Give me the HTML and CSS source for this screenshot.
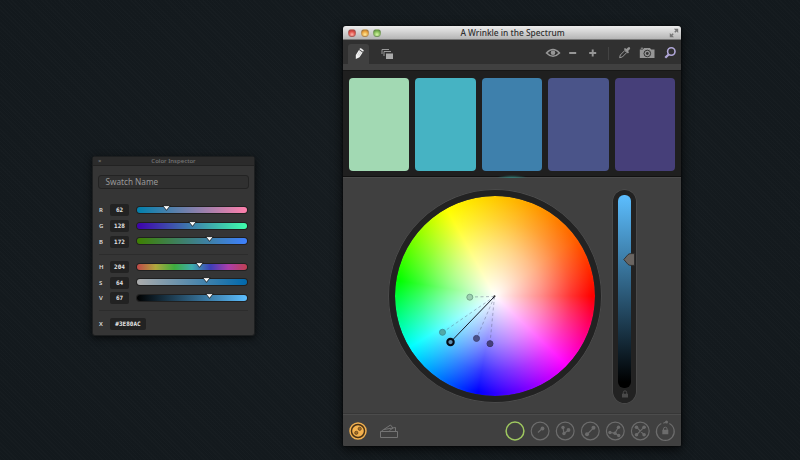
FILE: index.html
```html
<!DOCTYPE html>
<html lang="en">
<head>
<meta charset="utf-8">
<title>A Wrinkle in the Spectrum</title>
<link rel="stylesheet" href="styles.css">
</head>
<body>
<section class="inspector">
  <header class="ins-title"><span class="ins-close">×</span>Color Inspector</header>
  <div class="ins-name">Swatch Name</div>
  <div class="group rgb">
    <div class="row"><label>R</label><b>62</b><i class="track r"><svg class="knob k-r" viewBox="0 0 8 6"><path d="M.7.6h6.6L4 4.8z"/></svg></i></div>
    <div class="row"><label>G</label><b>128</b><i class="track g"><svg class="knob k-g" viewBox="0 0 8 6"><path d="M.7.6h6.6L4 4.8z"/></svg></i></div>
    <div class="row"><label>B</label><b>172</b><i class="track b"><svg class="knob k-b" viewBox="0 0 8 6"><path d="M.7.6h6.6L4 4.8z"/></svg></i></div>
  </div>
  <div class="group hsv">
    <div class="row"><label>H</label><b>204</b><i class="track h"><svg class="knob k-h" viewBox="0 0 8 6"><path d="M.7.6h6.6L4 4.8z"/></svg></i></div>
    <div class="row"><label>S</label><b>64</b><i class="track s"><svg class="knob k-s" viewBox="0 0 8 6"><path d="M.7.6h6.6L4 4.8z"/></svg></i></div>
    <div class="row"><label>V</label><b>67</b><i class="track v"><svg class="knob k-b" viewBox="0 0 8 6"><path d="M.7.6h6.6L4 4.8z"/></svg></i></div>
  </div>
  <div class="group hex">
    <div class="row"><label>X</label><b class="wide">#3E80AC</b></div>
  </div>
</section>

<main class="window">
  <header class="titlebar">
    <span class="lights"><i class="red"></i><i class="amber"></i><i class="green"></i></span>
    <span class="title">A Wrinkle in the Spectrum</span>
    <svg class="expand" viewBox="0 0 10 10"><path d="M4.800 .8H9.200v4.200zM.8 5v4.200h4.200z" fill="#777"/><path d="M8 2 5.800 4.200M2 8l2.200-2.200" stroke="#777" stroke-width="1.500"/></svg>
  </header>
  <nav class="toolbar">
    <span class="tab"><svg width="20" height="20" viewBox="0 0 20 20"><g transform="rotate(33 10 10)"><path d="M7.800 6.700h4.400v5.800L10.100 16 7.800 12.500z" fill="#f4f4f4"/><path d="M7.800 5.900V5q0-.8.800-.8h2.800q.8 0 .8.800v.9z" fill="#f4f4f4"/><path d="M9.400 7v5M10.900 7v5" stroke="#aaa" stroke-width=".4"/></g></svg></span>
    <svg class="layers" width="14" height="12" viewBox="0 0 14 12"><path d="M1 6V1.500h7M3 8V3.500h7" fill="none" stroke="#999" stroke-width="1"/><path d="M5 5.500h7V11H5z" fill="#aaa"/></svg>
    <svg class="tools" width="136" height="20" viewBox="0 0 136 20">
      <path d="M2.500 10Q9 3 15.500 10 9 16.500 2.500 10z" fill="none" stroke="#969696" stroke-width="1.500"/><circle cx="9" cy="9.800" r="2.300" fill="#969696"/>
      <path d="M25.200 10h7M45.200 10h7M48.700 6.500v7" stroke="#969696" stroke-width="1.900"/>
      <path d="M64.500 4v13" stroke="#434343"/>
      <path d="m75.600 14.700.7-2.700 4.500-4.500 2 2-4.500 4.500z" fill="none" stroke="#969696"/><path d="m79.800 6 1.200-1 1.400 1 1.600-1.600q1.200-.7 1.900.2.600 1-.1 1.700l-1.700 1.700.9 1.300-1.100 1.200z" fill="#969696"/>
      <path d="M95.800 6.500h3l1.300-1.500h5.800l1.300 1.500h3.300V15H95.800z" fill="#969696"/><path d="M96.800 5.200h2.300" stroke="#969696"/><circle cx="103.300" cy="10.500" r="3.300" fill="#969696" stroke="#333" stroke-width="1"/><circle cx="103.300" cy="10.500" r="1.400" fill="#333"/>
      <circle cx="127.300" cy="8.500" r="3.700" fill="none" stroke="#b1a7d8" stroke-width="1.600"/><path d="m124.600 11.400-3.300 3.400" stroke="#b1a7d8" stroke-width="2.200"/>
    </svg>
  </nav>
  <div class="band"></div>
  <div class="swatches"><i class="s1"></i><i class="s2"></i><i class="s3"></i><i class="s4"></i><i class="s5"></i></div>
  <div class="stage">
    <div class="glow"></div>
    <div class="wheel">
      <svg class="marks" viewBox="394.500 196.500 200 200">
        <g stroke="#555a77" stroke-opacity=".5" stroke-width=".8" stroke-dasharray="3 2.500" fill="none"><path d="M494 297l-25 .5M494 297l-52 36M494 297l-18 42M494 297l-4.500 47"/></g>
        <path d="M494 297l-42 43.500" stroke="#161a26" stroke-width="1"/><circle cx="494" cy="296.800" r="1" fill="#333"/>
        <circle cx="469.300" cy="297.700" r="3" fill="#9bcfb0" stroke="#76a98c"/>
        <circle cx="442" cy="332.800" r="3" fill="#52a9a8" stroke="#3c959f"/>
        <circle cx="476" cy="338.900" r="3" fill="#4a508b" stroke="#414679"/>
        <circle cx="489.500" cy="344.200" r="3" fill="#463f7d" stroke="#3c376e"/>
        <circle cx="450" cy="342.600" r="3.200" fill="#5b90b3" stroke="#050b14" stroke-width="2.100"/>
      </svg>
    </div>
    <div class="value">
      <i class="fill"></i>
      <svg class="lock" viewBox="0 0 8 8"><path d="M1 3.700h6V7.500H1z" fill="#4a4a4a"/><path d="M2.300 4V2.500a1.700 1.700 0 0 1 3.400 0V4" fill="none" stroke="#4a4a4a"/></svg>
      <svg class="handle" viewBox="0 0 12 13"><path d="M.8 6.500 5 1.600Q6.200.6 8 .6h3.500v11.800H8q-1.800 0-3-1z" fill="#6a6561" stroke="#272727" stroke-width=".8"/></svg>
    </div>
  </div>
  <footer class="footer">
    <svg width="52" height="22" viewBox="0 0 52 22">
      <circle cx="11" cy="11" r="8" fill="#493216" stroke="#efaf50" stroke-width="1.500"/><circle cx="11" cy="11" r="5.800" fill="#f3b14e"/><circle cx="12.700" cy="8.800" r="1.600" fill="#a76e25" stroke="#51391a" stroke-width=".7"/><circle cx="9.300" cy="12.800" r="1.600" fill="#a76e25" stroke="#51391a" stroke-width=".7"/>
      <path d="M33.500 11.500h17v6h-17zM34.500 11l9-6 2.500 3-3.500 2.500M37 9.500l11.500-2v4" fill="none" stroke="#747474"/>
    </svg>
    <svg width="174" height="22" viewBox="0 0 174 22">
      <circle cx="11" cy="11" r="8.900" fill="none" stroke="#9ec75f" stroke-width="1.500"/>
      <g fill="none" stroke="#6c6c6c" stroke-width="1.200"><circle cx="36.100" cy="11" r="8.900"/><circle cx="61.200" cy="11" r="8.900"/><circle cx="86.300" cy="11" r="8.900"/><circle cx="111.300" cy="11" r="8.900"/><circle cx="136.300" cy="11" r="8.900"/><path d="M157.300 3.500a8.900 8.900 0 1 0 8 0M161.500 2.200l-2.200 1"/>
        <path d="m34 12.500 4-3.800M59 7.500l1 6 4.500-3.500M83 14.500l6.500-6.700M106 12.500l5 .7 3.300-6M111 13.200l3.500 2.300M132.500 7.200l7.600 7.600M140.100 7.200l-7.600 7.600"/></g>
      <g fill="#6c6c6c"><circle cx="38.500" cy="8.500" r="1.900"/><circle cx="59" cy="7.500" r="1.700"/><circle cx="60" cy="13.500" r="1.700"/><circle cx="64.500" cy="10" r="1.900"/><circle cx="83" cy="14.300" r="2"/><circle cx="89.500" cy="7.800" r="2"/><circle cx="106" cy="12.500" r="1.700"/><circle cx="111" cy="13.200" r="1.700"/><circle cx="114.500" cy="7.200" r="1.700"/><circle cx="114.700" cy="15.500" r="1.700"/><circle cx="132.500" cy="7.200" r="1.800"/><circle cx="140.100" cy="7.200" r="1.800"/><circle cx="132.500" cy="14.800" r="1.800"/><circle cx="140.100" cy="14.800" r="1.800"/><path d="M158.300 9.800h6v4.500h-6z"/><circle cx="162.500" cy="2" r="1.500"/></g>
      <path d="M159.500 10V9a1.800 1.800 0 0 1 3.600 0v1" fill="none" stroke="#6c6c6c"/>
    </svg>
  </footer>
</main>
</body>
</html>
```
FILE: styles.css
```css
* { box-sizing: border-box; }
body {
  margin: 0; width: 800px; height: 460px; overflow: hidden; position: relative;
  font-family: "Noto Sans", "Open Sans", sans-serif;
  background: repeating-linear-gradient(45deg, rgba(255,255,255,.013) 0 1px, transparent 1px 3px), radial-gradient(ellipse at 50% 45%, #161c20, #13191d 90%);
}
i, b { font-style: normal; display: block; }
svg { display: block; }

.inspector {
  position: absolute; left: 92px; top: 156px; width: 163px; height: 180px;
  background: #353535; border: 1px solid #1d1f20; border-radius: 3px;
  box-shadow: 0 2px 7px #000a; padding: 0 6px;
}
.ins-title {
  height: 9px; margin: 0 -6px; background: #2b2b2b; border-bottom: 1px solid #222;
  color: #777; font-size: 6px; font-weight: 500; line-height: 8px; text-align: center; position: relative;
}
.ins-close { position: absolute; left: 5px; top: 0; }
.ins-name {
  height: 14px; margin: 9px -1px 0; border: 1px solid #232323; border-radius: 3px; width: 151px;
  background: #303030; color: #999; font-size: 8.2px; line-height: 12px; padding-left: 6.500px;
}
.group { display: flex; flex-direction: column; gap: 3.700px; }
.rgb { margin-top: 15.400px; }
.hsv { margin-top: 6px; border-top: 1px solid #2c2c2c; padding-top: 6.300px; }
.hex { margin-top: 6px; border-top: 1px solid #2c2c2c; padding-top: 7px; }
.row { display: flex; align-items: center; height: 12px; }
.row label { width: 11px; color: #ddd; font-size: 6px; font-weight: 600; line-height: 12px; }
.row b {
  width: 19px; height: 12px; border-radius: 2px; background: #222; color: #e5e5e5;
  font: 600 6px/12px "DejaVu Sans Mono", monospace; text-align: center; margin-right: 8px;
}
.row b.wide { width: 36px; }
.track { width: 110px; height: 6px; margin-top: -1px; border-radius: 3px; box-shadow: 0 0 0 1px #202020; position: relative; }
.r { background: linear-gradient(90deg, #0080ac, #ff80ac); }
.g { background: linear-gradient(90deg, #3e00ac, #3effac); }
.b { background: linear-gradient(90deg, #3e8000, #3e80ff); }
.h { background: linear-gradient(90deg, #c04848, #b0a83e 17%, #3eac3e 34%, #3eacac 50%, #3e3eb8 67%, #ac3eac 83%, #c04050); }
.s { background: linear-gradient(90deg, #acacac, #0068ac); }
.v { background: linear-gradient(90deg, #000, #5cbeff); }
.knob { position: absolute; top: -2px; width: 9px; height: 6.700px; fill: #fff; stroke: #151515; stroke-width: .7; }
.k-r { left: 25px; } .k-g { left: 51px; } .k-b { left: 68px; } .k-h { left: 57.500px; } .k-s { left: 65px; }

.window {
  position: absolute; left: 343px; top: 26px; width: 338px; height: 420px;
  display: flex; flex-direction: column; background: #404040; border-radius: 3px 3px 1px 1px;
  box-shadow: 0 3px 12px #000c, 0 0 2px #000; overflow: hidden;
}
.titlebar {
  height: 14px; display: flex; align-items: center; justify-content: space-between; padding: 0 2px 0 5px;
  background: linear-gradient(#ececec, #b5b5b5); border-bottom: 1px solid #777;
}
.lights { display: flex; gap: 4.600px; width: 48px; }
.lights i { width: 8px; height: 8px; border-radius: 50%; border: .5px solid #7776; }
.red { background: radial-gradient(circle at 50% 75%, #ffb3aa, #df5048 55%, #a83430); }
.amber { background: radial-gradient(circle at 50% 75%, #ffeb9d, #eba640 55%, #a96c24); }
.green { background: radial-gradient(circle at 50% 75%, #d7f8a5, #84bd58 55%, #4e7f32); }
.title { font-size: 8.4px; font-weight: 500; line-height: 13px; color: #303030; white-space: nowrap; }
.expand { width: 10px; height: 10px; margin-left: 40px; }
.toolbar { height: 24px; background: #303030; display: flex; align-items: center; padding-left: 5px; flex: none; }
.tab { width: 21px; height: 20px; margin-top: 4px; background: #404040; border-radius: 3px 3px 0 0; display: flex; justify-content: center; }
.layers { margin-left: 12px; margin-top: 3px; }
.tools { margin-left: auto; margin-right: 1px; margin-top: 1px; }
.band { height: 7px; flex: none; background: #404040; border-bottom: 1px solid #171717; }
.swatches { height: 106px; flex: none; background: #1f1f1f; border-bottom: 1px solid #111; display: flex; gap: 6px; padding: 6.500px 6px 5px; }
.swatches i { flex: 1; border-radius: 4px; }
.s1 { background: #a2d9b3; } .s2 { background: #46b3c3; } .s3 { background: #3e80ac; } .s4 { background: #4a5489; } .s5 { background: #463f79; }
.stage { height: 237px; flex: none; border-top: 1px solid #4b4b4b; display: flex; padding: 12px 0 0 45.500px; position: relative; }
.glow { position: absolute; left: 153px; top: -3px; width: 32px; height: 3px; background: radial-gradient(ellipse at bottom, #337e77, transparent 70%); }
.wheel {
  width: 212px; height: 212px; flex: none; border-radius: 50%; border: 6px solid #222; background-clip: padding-box;
  background-image: radial-gradient(circle closest-side, #fff 0, #fffc 20%, #fff8 47%, #fff3 76%, #fff0 97%),
    conic-gradient(from 90deg, #f00 0deg, #f0f 44deg, #60f 76deg, #00f 100deg, #0ff 149deg, #0f0 189deg, #ff0 241deg, #ffb000 285deg, #ff6000 325deg, #f00 360deg);
  box-shadow: 0 0 0 .5px #555;
}
.marks { width: 200px; height: 200px; }
.value { width: 23px; height: 213px; margin-left: 12.500px; border-radius: 12px; background: #222; box-shadow: 0 0 0 .5px #555; padding: 5px; position: relative; }
.fill { width: 13px; height: 193px; border-radius: 6px; background: linear-gradient(#5cbeff, #000 97%); }
.lock { width: 8px; height: 8px; margin: 2px 0 0 2.500px; }
.handle { position: absolute; left: 10px; top: 63px; width: 12px; height: 13px; }
.footer { height: 32px; border-top: 1px solid #4c4c4c; box-shadow: 0 -1px #373737; display: flex; justify-content: space-between; align-items: center; padding: 1px 3px 0 4px; }
```
